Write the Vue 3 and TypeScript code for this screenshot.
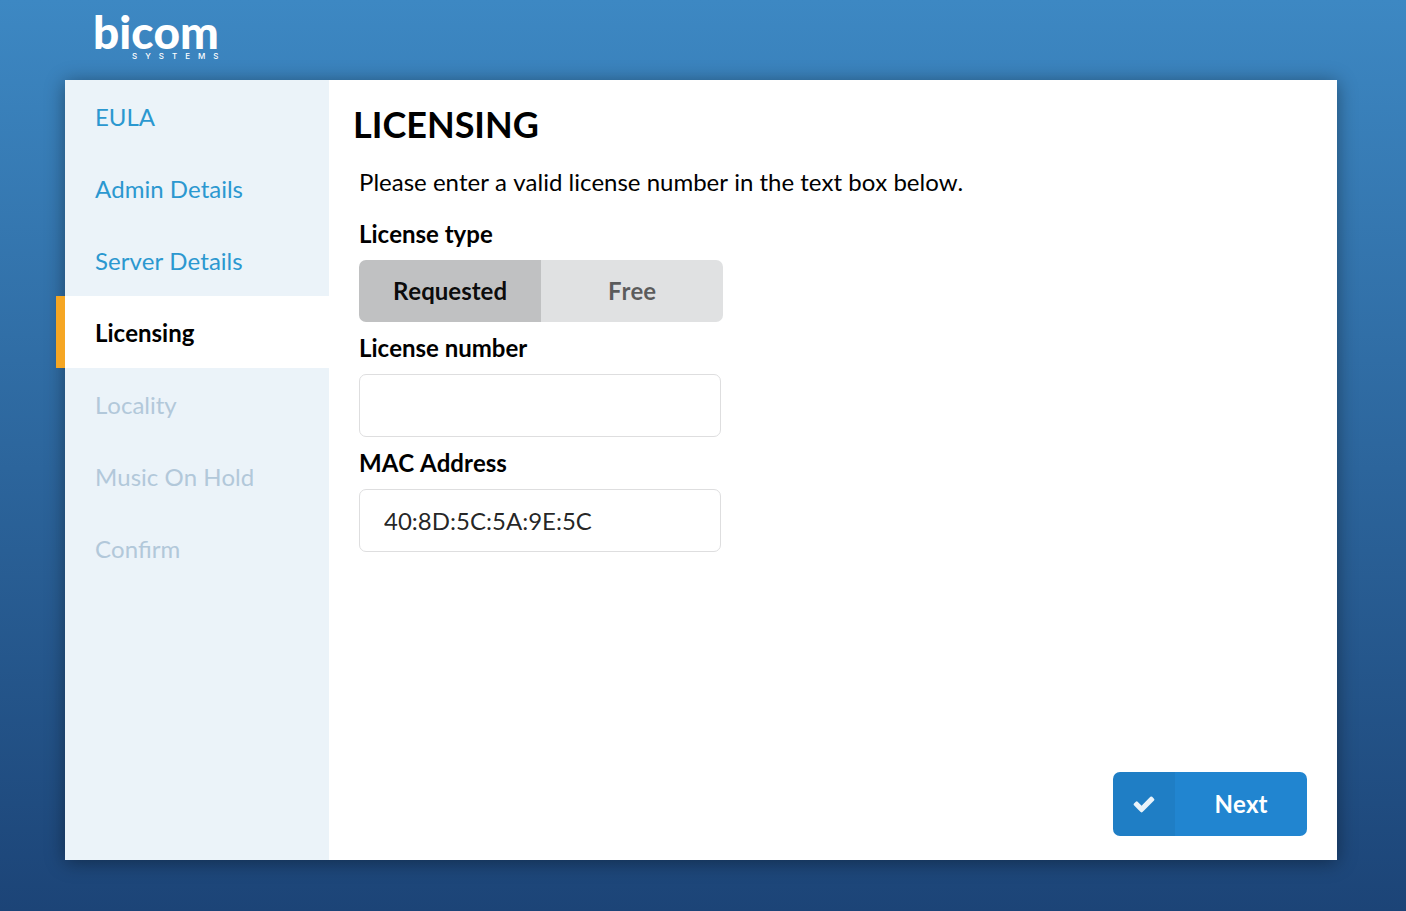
<script setup lang="ts">
import { ref } from 'vue'

interface Step {
  label: string
  state: 'done' | 'active' | 'pending'
}

const steps: Step[] = [
  { label: 'EULA', state: 'done' },
  { label: 'Admin Details', state: 'done' },
  { label: 'Server Details', state: 'done' },
  { label: 'Licensing', state: 'active' },
  { label: 'Locality', state: 'pending' },
  { label: 'Music On Hold', state: 'pending' },
  { label: 'Confirm', state: 'pending' },
]

const licenseTypes = ['Requested', 'Free']
const licenseType = ref('Requested')
const licenseNumber = ref('')
const macAddress = ref('40:8D:5C:5A:9E:5C')
</script>

<template>
  <div class="page">
    <header class="header">
      <svg class="logo" viewBox="0 0 160 80" role="img" aria-label="bicom systems">
        <text class="logo-name" x="0" y="49">bicom</text>
        <text class="logo-sub" x="39" y="59">SYSTEMS</text>
      </svg>
    </header>

    <div class="card">
      <nav class="steps" aria-label="Setup steps">
        <template v-for="step in steps" :key="step.label">
          <span v-if="step.state === 'pending'" class="step pending">{{ step.label }}</span>
          <a
            v-else
            href="#"
            class="step"
            :class="step.state"
            :aria-current="step.state === 'active' ? 'step' : undefined"
            @click.prevent
          >{{ step.label }}</a>
        </template>
      </nav>

      <main class="content">
        <h1 class="title">LICENSING</h1>
        <form class="form" @submit.prevent>
          <p class="intro">Please enter a valid license number in the text box below.</p>

          <div id="type-label" class="label">License type</div>
          <div class="toggle" role="group" aria-labelledby="type-label">
            <button
              v-for="type in licenseTypes"
              :key="type"
              type="button"
              class="toggle-button"
              :class="{ selected: licenseType === type }"
              :aria-pressed="licenseType === type"
              @click="licenseType = type"
            >{{ type }}</button>
          </div>

          <label class="label" for="license-number">License number</label>
          <input id="license-number" v-model="licenseNumber" class="field" type="text" />

          <label class="label" for="mac-address">MAC Address</label>
          <input id="mac-address" v-model="macAddress" class="field" type="text" />

          <button type="submit" class="next">
            <span class="next-icon">
              <svg viewBox="0 0 1792 1792" width="24" height="24" aria-hidden="true">
                <path
                  fill="currentColor"
                  d="M1671 566q0 40-28 68l-724 724-136 136q-28 28-68 28t-68-28l-136-136-362-362q-28-28-28-68t28-68l136-136q28-28 68-28t68 28l294 295 656-657q28-28 68-28t68 28l136 136q28 28 28 68z"
                />
              </svg>
            </span>
            <span class="next-label">Next</span>
          </button>
        </form>
      </main>
    </div>
  </div>
</template>

<style>
body {
  margin: 0;
}
</style>

<style scoped>
.page {
  box-sizing: border-box;
  display: flex;
  flex-direction: column;
  min-height: 100vh;
  padding: 0 69px 51px 65px;
  background: linear-gradient(#3d88c3, #1c4477);
  font-family: Lato, 'Liberation Sans', sans-serif;
  font-size: 24px;
  font-kerning: none;
  line-height: 32px;
  color: #000;
}

.header {
  padding: 0 28px;
}

.logo {
  display: block;
  width: 160px;
  height: 80px;
  fill: #fff;
}

.logo-name {
  font-family: Lato, sans-serif;
  font-size: 46px;
  font-weight: 900;
}

.logo-sub {
  font-family: Inter, sans-serif;
  font-size: 8px;
  font-weight: 500;
  letter-spacing: 8px;
}

.card {
  flex: 1;
  display: flex;
  background: #fff;
  box-shadow: 0 2px 18px rgba(0, 0, 0, 0.4);
}

.steps {
  flex: 0 0 264px;
  display: flex;
  flex-direction: column;
  background: #ebf3f9;
}

.step {
  box-sizing: border-box;
  height: 72px;
  padding: 21px 30px;
  color: #2b98d0;
  text-decoration: none;
}

.step.active {
  margin-left: -9px;
  border-left: 9px solid #f5a623;
  background: #fff;
  color: #000;
  font-weight: 700;
}

.step.pending {
  color: #b2c8da;
}

.content {
  flex: 1;
  display: flex;
  flex-direction: column;
  padding: 24px 30px 24px 24px;
}

.title {
  margin: 0;
  font-size: 36px;
  line-height: 40px;
  font-weight: 700;
}

.form {
  flex: 1;
  display: flex;
  flex-direction: column;
  align-items: flex-start;
  padding-left: 6px;
}

.intro {
  margin: 22px 0 20px;
}

.label {
  margin-bottom: 10px;
  font-weight: 700;
}

.toggle {
  display: flex;
  width: 364px;
  margin-bottom: 10px;
  border-radius: 7px;
  overflow: hidden;
}

.toggle-button {
  flex: 1;
  height: 62px;
  padding: 0;
  border: 0;
  background: #e0e1e2;
  color: rgba(0, 0, 0, 0.6);
  font: inherit;
  font-kerning: none;
  font-weight: 700;
}

.toggle-button.selected {
  background: #c0c1c2;
  color: rgba(0, 0, 0, 0.95);
}

.field {
  box-sizing: border-box;
  width: 362px;
  height: 63px;
  margin: 0 0 10px;
  padding: 0 24px;
  border: 1px solid #dededf;
  border-radius: 7px;
  background: #fff;
  color: rgba(0, 0, 0, 0.87);
  font: inherit;
}

.next {
  display: flex;
  align-self: flex-end;
  width: 194px;
  height: 64px;
  margin-top: auto;
  padding: 0;
  border: 0;
  border-radius: 7px;
  overflow: hidden;
  background: #2185d0;
  color: #fff;
  font: inherit;
  font-kerning: none;
  font-weight: 700;
}

.next-icon {
  flex: 0 0 62px;
  display: flex;
  align-items: center;
  justify-content: center;
  align-self: stretch;
  background: rgba(0, 0, 0, 0.05);
  color: #e9f3fa;
}

.next-label {
  flex: 1;
  align-self: center;
}
</style>
